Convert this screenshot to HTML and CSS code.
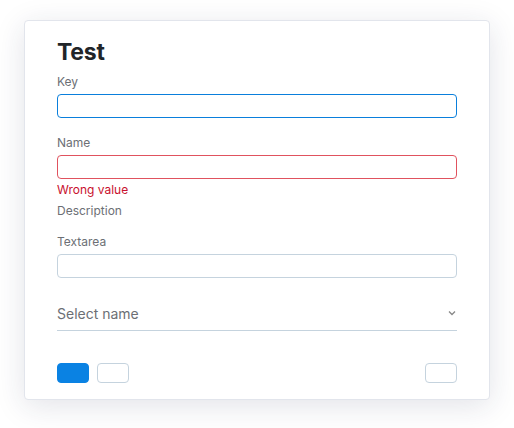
FILE: index.html
```html
<!DOCTYPE html>
<html>
<head>
<meta charset="utf-8">
<link rel="stylesheet" href="styles.css">
</head>
<body>
<div class="card">
  <h1 class="title">Test</h1>
  <div class="field">
    <label class="label">Key</label>
    <div class="input focus"></div>
  </div>
  <div class="field">
    <label class="label">Name</label>
    <div class="input error"></div>
    <div class="err">Wrong value</div>
  </div>
  <div class="label desc">Description</div>
  <div class="field">
    <label class="label">Textarea</label>
    <div class="input"></div>
  </div>
  <div class="select">
    <span>Select name</span>
    <svg class="chev" width="8" height="6" viewBox="0 0 8 6"><path d="M1 1.5 L4 4.5 L7 1.5" fill="none" stroke="#888" stroke-width="1.3"/></svg>
  </div>
  <div class="actions">
    <div class="left">
      <div class="btn primary"></div>
      <div class="btn"></div>
    </div>
    <div class="btn"></div>
  </div>
</div>
</body>
</html>
```
FILE: styles.css
```css
html, body { margin: 0; padding: 0; background: #fff; }
body {
  font-family: "Inter", "Liberation Sans", sans-serif;
  color: #212529;
  min-height: 428px;
  padding: 20px 0 0 24px;
  box-sizing: border-box;
}
.card {
  box-sizing: border-box;
  width: 466px;
  height: 380px;
  border: 1px solid #e2e5ec;
  border-radius: 4px;
  background: #fff;
  box-shadow: 0 6px 30px rgba(30, 40, 80, 0.13);
  padding: 14px 32px 0 32px;
}
.title {
  margin: 0;
  font-size: 23px;
  font-weight: 700;
  line-height: 34px;
  letter-spacing: -0.2px;
}
.field { display: flex; flex-direction: column; }
.label {
  font-size: 12px;
  color: #6c6f75;
  line-height: 16px;
  margin: 5px 0 4px;
}
.input {
  box-sizing: border-box;
  height: 24px;
  border: 1px solid #c5d3de;
  border-radius: 4px;
  background: #fff;
}
.input.focus { border-color: #0a7fdc; }
.input.error { border-color: #e0525e; }
.field + .field { margin-top: 12px; }
.err {
  font-size: 12px;
  color: #c8102e;
  line-height: 16px;
  margin-top: 3px;
}
.desc { margin: 5px 0 0; }
.desc + .field { margin-top: 10px; }
.select {
  margin-top: 18px;
  display: flex;
  justify-content: space-between;
  align-items: center;
  height: 34px;
  border-bottom: 1px solid #c5d3de;
  font-size: 14px;
  color: #6c6f75;
}
.chev { margin-right: 1px; }
.actions {
  margin-top: 32px;
  display: flex;
  justify-content: space-between;
}
.left { display: flex; gap: 8px; }
.btn {
  box-sizing: border-box;
  width: 32px;
  height: 20px;
  border: 1px solid #c5d3de;
  border-radius: 4px;
  background: #fff;
}
.btn.primary { background: #0a82e3; border-color: #0a82e3; }
```
